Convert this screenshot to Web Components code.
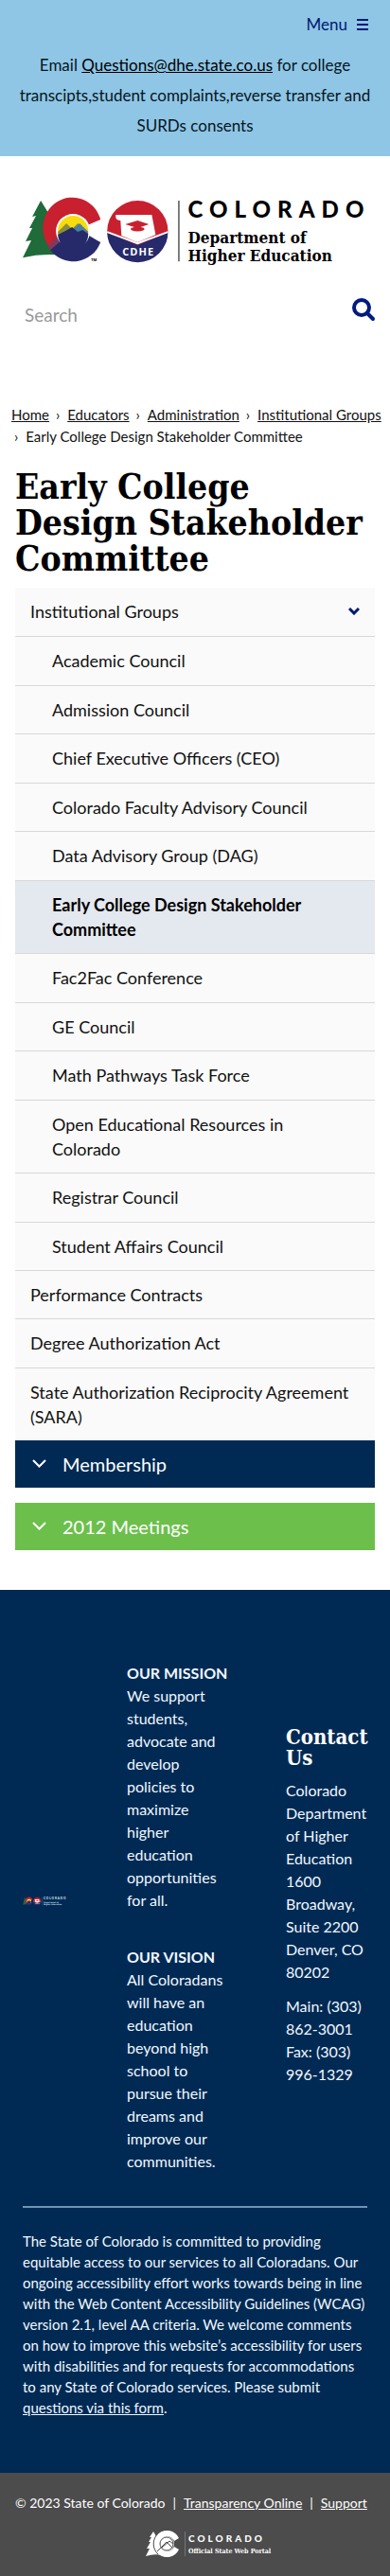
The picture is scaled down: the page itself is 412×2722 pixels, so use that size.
<!DOCTYPE html>
<html lang="en">
<head>
<meta charset="utf-8">
<meta name="viewport" content="width=device-width, initial-scale=1">
<title>Early College Design Stakeholder Committee</title>
<style>
body { margin: 0; background: #fff; color: #111; font-family: Lato, "Open Sans", sans-serif; --slab: "DejaVu Serif Condensed", "DejaVu Serif", serif; --navy: #002a54; }
</style>
</head>
<body>
<site-banner></site-banner>
<site-header></site-header>
<main>
<bread-crumbs></bread-crumbs>
<page-title>Early College Design Stakeholder Committee</page-title>
<side-nav></side-nav>
<accordion-bar>Membership</accordion-bar>
<accordion-bar tone="green">2012 Meetings</accordion-bar>
</main>
<site-footer></site-footer>
<portal-bar></portal-bar>
<script>
function define(name, html) {
  const template = document.createElement('template');
  template.innerHTML = html;
  customElements.define(name, class extends HTMLElement {
    constructor() {
      super();
      this.attachShadow({ mode: 'open' }).append(template.content.cloneNode(true));
    }
  });
}

define('co-logo', `
<style>
:host { display: block; }
svg { display: block; width: 100%; height: auto; overflow: visible; }
.ink { fill: var(--logo-ink, #000); }
.name { font: 900 24px Lato, sans-serif; letter-spacing: 7px; }
.dept { font: bold 17px var(--slab); }
.seal { font: bold 11px "Open Sans", sans-serif; letter-spacing: 1px; fill: #fff; }
.tm { font: bold 4px "Open Sans", sans-serif; }
</style>
<svg viewBox="0 0 363 66" role="img" aria-label="Colorado Department of Higher Education">
  <path fill="#1f6b3a" d="M19 0 27 13 44 58Q22 55 0 60L9 42 3 43 10 29 7 29 14 16 10 17Z"/>
  <path fill="#c8202f" d="M82 20A31 32 0 1 0 32 53L54 32 68 26Z"/>
  <path fill="#7d3a5c" d="M37 37 26 49 32 55 43 44Z"/>
  <path fill="#262a6b" d="M29 52 43 40 70 37 82 44A31 32 0 0 1 29 52Z"/>
  <circle cx="53" cy="32" r="18" fill="#fff"/>
  <circle cx="53" cy="32" r="16" fill="#f9dc0b"/>
  <path fill="#8a8f3a" d="M37 33 46 24 52 30 58 24 69 33A16 16 0 0 1 37 33Z"/>
  <path fill="#4c7fa3" d="M50 33 60 24 69 33 53 40Z"/>
  <path fill="#262a6b" d="M37 36 45 32 52 28 58 33 63 31 69 35A16 16 0 0 1 37 36Z"/>
  <circle cx="121" cy="32" r="32" fill="#c8202f"/>
  <path fill="#262a6b" d="M89 33 121 47 153 33A32 32 0 0 1 89 33Z"/>
  <path fill="none" stroke="#fff" stroke-width="2" d="M89 33 121 45 153 33"/>
  <path fill="#fff" d="M98 15H136L140 36 121 44 104 37 103 21Q99 21 98 18Z"/>
  <path fill="#c8202f" d="M108 25 121 21 133 25 121 29ZM114 29Q121 26 128 29V31Q121 34 114 31Z"/>
  <text class="seal" x="105" y="58">CDHE</text>
  <text class="tm ink" x="72" y="64">TM</text>
  <path class="ink" d="M164 0h1v64h-1z"/>
  <text class="name ink" x="174" y="18">COLORADO</text>
  <text class="dept ink" x="174" y="45">Department of</text>
  <text class="dept ink" x="174" y="64">Higher Education</text>
</svg>`);

define('site-banner', `
<style>
:host { display: block; background: #8fc6e6; padding: 14px 16px 16px; }
button { display: flex; align-items: center; gap: 10px; margin-left: auto; padding: 0 7px; border: 0; background: none; color: #001970; font: 17px/24px Lato, sans-serif; }
svg { display: block; }
p { margin: 15px 0 0; text-align: center; font-size: 17px; line-height: 32px; color: #071521; }
a { color: #000; }
</style>
<button type="button">Menu <svg width="12" height="12" viewBox="0 0 12 12" fill="#001970" aria-hidden="true"><path d="M0 0h12v2H0zM0 5h12v2H0zM0 10h12v2H0z"/></svg></button>
<p>Email <a href="mailto:Questions@dhe.state.co.us">Questions@dhe.state.co.us</a> for college transcipts,student complaints,reverse transfer and SURDs consents</p>`);

define('site-header', `
<style>
:host { display: block; padding: 47px 24px 82px; }
form { display: flex; align-items: center; margin-top: 31px; }
input { flex: 1; min-width: 0; padding: 12px 2px 0; border: 0; background: none; font: 19px/24px Lato, sans-serif; color: #111; }
input::placeholder { color: #999; opacity: 1; }
button { padding: 0 15px 0 0; margin-right: -24px; border: 0; background: none; }
svg { display: block; }
</style>
<co-logo></co-logo>
<form role="search">
  <input type="search" placeholder="Search" aria-label="Search">
  <button type="button" aria-label="Search"><svg width="26" height="26" viewBox="0 0 26 26" fill="none" stroke="#001b80" stroke-width="4"><circle cx="11" cy="11" r="8"/><path stroke-linecap="round" d="M17 17 23 23"/></svg></button>
</form>`);

define('bread-crumbs', `
<style>
:host { display: block; padding: 0 0 0 12px; font-size: 15px; line-height: 23px; }
a { color: #111; }
ol { display: flex; flex-wrap: wrap; list-style: none; margin: 0; padding: 0; }
li + li::before { content: "›"; padding: 0 8px 0 7px; }
li:last-child::before { padding: 0 8px 0 3px; }
</style>
<nav aria-label="Breadcrumb"><ol>
<li><a href="#">Home</a></li><li><a href="#">Educators</a></li><li><a href="#">Administration</a></li><li><a href="#">Institutional Groups</a></li><li>Early College Design Stakeholder Committee</li>
</ol></nav>`);

define('page-title', `
<style>
:host { display: block; padding: 22px 24px 12px 16px; }
h1 { margin: 0; font: bold 37px/38px var(--slab); color: #000; }
</style>
<h1><slot></slot></h1>`);

define('side-nav', `
<style>
:host { display: block; margin: 0 16px; background: #fafafa; font-size: 18px; line-height: 26px; }
ul { list-style: none; margin: 0; padding: 0; }
a { display: flex; justify-content: space-between; align-items: center; padding: 12px 16px; color: #111; text-decoration: none; border-bottom: 1px solid #d8d8d8; }
.sub a { padding-right: 40px; padding-left: 39px; }
li:nth-child(odd) > a { padding-bottom: 13px; }
a.current { background: #e4e8ef; font-weight: bold; color: #000; }
.top > li:last-child > a { border: 0; }
</style>
<nav aria-label="Section"><ul class="top">
<li><a href="#">Institutional Groups <svg width="12" height="8" viewBox="0 0 12 8" fill="none" stroke="#001b70" stroke-width="3" aria-hidden="true"><path d="M1 1 6 6 11 1"/></svg></a>
<ul class="sub">
<li><a href="#">Academic Council</a></li>
<li><a href="#">Admission Council</a></li>
<li><a href="#">Chief Executive Officers (CEO)</a></li>
<li><a href="#">Colorado Faculty Advisory Council</a></li>
<li><a href="#">Data Advisory Group (DAG)</a></li>
<li><a href="#" class="current" aria-current="page">Early College Design Stakeholder Committee</a></li>
<li><a href="#">Fac2Fac Conference</a></li>
<li><a href="#">GE Council</a></li>
<li><a href="#">Math Pathways Task Force</a></li>
<li><a href="#">Open Educational Resources in Colorado</a></li>
<li><a href="#">Registrar Council</a></li>
<li><a href="#">Student Affairs Council</a></li>
</ul></li>
<li><a href="#">Performance Contracts</a></li>
<li><a href="#">Degree Authorization Act</a></li>
<li><a href="#">State Authorization Reciprocity Agreement (SARA)</a></li>
</ul></nav>`);

define('accordion-bar', `
<style>
:host { display: block; margin: 0 16px 16px; }
button { display: flex; align-items: center; gap: 17px; width: 100%; padding: 12px 18px; border: 0; background: var(--navy); color: #fff; font: 20px/26px Lato, sans-serif; text-align: left; }
:host([tone="green"]) button { background: #6cbf4b; }
</style>
<button type="button" aria-expanded="false"><svg width="15" height="10" viewBox="0 0 15 10" fill="none" stroke="#fff" stroke-width="2" aria-hidden="true"><path d="M1 1 7.500 7.500 14 1"/></svg><slot></slot></button>`);

define('site-footer', `
<style>
:host { display: block; margin-top: 42px; background: var(--navy); color: #f2f8ff; padding: 76px 24px 58px; font-size: 16px; line-height: 24px; }
.cols { display: grid; grid-template-columns: 46px 1fr 86px; align-items: center; padding-bottom: 35px; border-bottom: 2px solid #6f95b5; }
co-logo { --logo-ink: #dbe6f2; padding-bottom: 34px; }
.about { padding: 0 60px 0 64px; }
p { margin: 0; }
.about p + p { margin-top: 36px; }
.contact { padding-bottom: 24px; margin-right: -10px; }
h2 { margin: 0 0 12px; font: bold 22px/22px var(--slab); color: #fff; }
.contact p + p { margin-top: 12px; }
.access { margin-top: 24px; font-size: 15px; line-height: 22px; }
a { color: inherit; }
</style>
<footer>
<div class="cols">
<co-logo></co-logo>
<div class="about">
<p><b>OUR MISSION</b><br>We support students, advocate and develop policies to maximize higher education opportunities for all.</p>
<p><b>OUR VISION</b><br>All Coloradans will have an education beyond high school to pursue their dreams and improve our communities.</p>
</div>
<div class="contact">
<h2>Contact Us</h2>
<p>Colorado Department of Higher Education<br>1600 Broadway, Suite 2200<br>Denver, CO 80202</p>
<p>Main: (303) 862-3001<br>Fax: (303) 996-1329</p>
</div>
</div>
<p class="access">The State of Colorado is committed to providing equitable access to our services to all Coloradans. Our ongoing accessibility effort works towards being in line with the Web Content Accessibility Guidelines (WCAG) version 2.1, level AA criteria. We welcome comments on how to improve this website’s accessibility for users with disabilities and for requests for accommodations to any State of Colorado services. Please submit <a href="#">questions via this form</a>.</p>
</footer>`);

define('portal-bar', `
<style>
:host { display: block; background: #4c4c4c; color: #fff; padding: 20px 16px; font-size: 14px; line-height: 24px; }
.line { display: flex; flex-wrap: wrap; gap: 0 8px; }
.brand { display: flex; justify-content: center; padding: 17px 0 0 30px; }
a { color: #fff; }
svg { display: block; }
.name { font: 900 10px Lato, sans-serif; letter-spacing: 3px; }
.tag { font: bold 7px var(--slab); }
</style>
<div class="line"><span>© 2023 State of Colorado</span><span>|</span><a href="#">Transparency Online</a><span>|</span><a href="#">Support</a></div>
<div class="brand"><svg width="135" height="28" viewBox="0 0 135 28" fill="#fff" role="img" aria-label="Colorado Official State Web Portal">
  <path d="M8 1 14 11 18 26Q9 24 0 27L4 19 1 19 5 12 3 12 6 7 4 7Z"/>
  <path d="M35 8A14 14 0 1 0 35 20L30 17A8 8 0 1 1 30 11Z"/>
  <circle cx="22" cy="14" r="8"/>
  <path fill="none" stroke="#4c4c4c" d="M13 3A15 15 0 0 0 13 25"/>
  <circle cx="22" cy="14" r="7" fill="none" stroke="#4c4c4c"/>
  <path fill="none" stroke="#4c4c4c" d="M12 22 22 12 28 18M17 18 25 11 29 14"/>
  <path fill="#777" d="M41 1h1v26h-1z"/>
  <text class="name" x="45" y="12">COLORADO</text>
  <text class="tag" x="45" y="24">Official State Web Portal</text>
</svg></div>`);
</script>
</body>
</html>
